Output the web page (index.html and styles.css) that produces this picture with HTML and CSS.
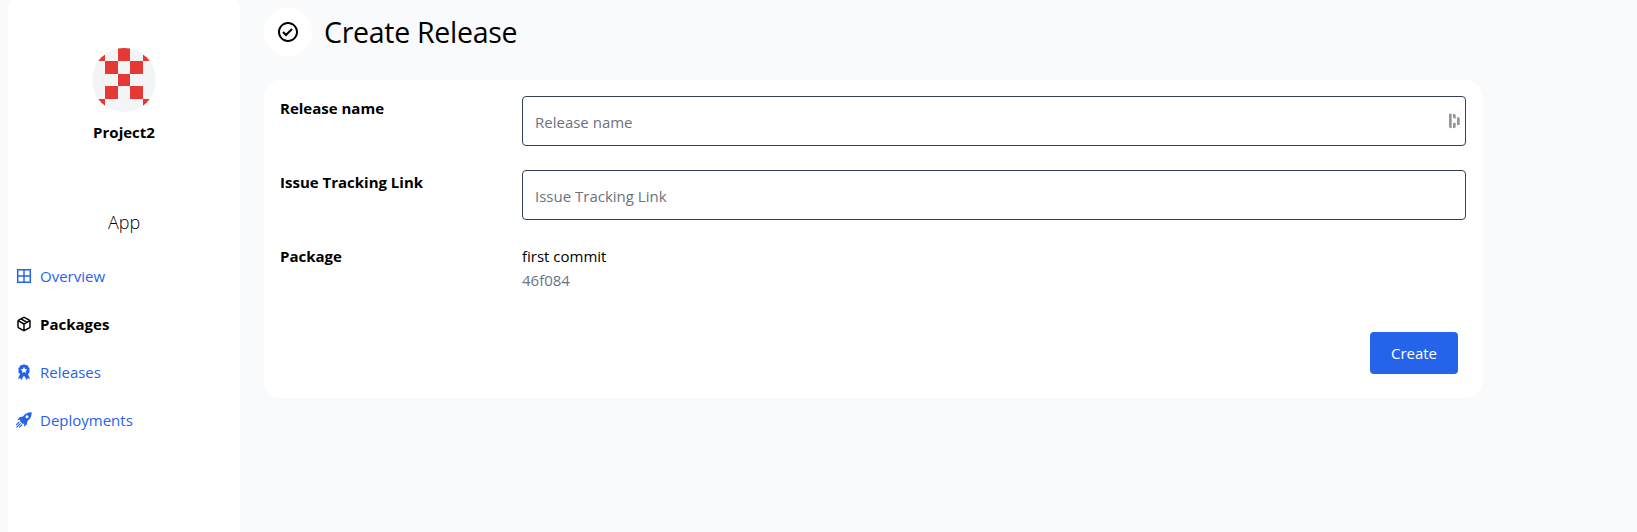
FILE: index.html
```html
<!DOCTYPE html>
<html lang="en">
<head>
<meta charset="utf-8">
<title>Create Release</title>
<link rel="stylesheet" href="styles.css">
</head>
<body>
<div class="layout">
  <aside class="sidebar">
    <svg class="avatar" viewBox="0 0 5 5" shape-rendering="crispEdges">
      <path fill="#e53935" d="M0 0h1v1H0zM2 0h1v1H2zM4 0h1v1H4zM1 1h1v1H1zM3 1h1v1H3zM2 2h1v1H2zM1 3h1v1H1zM3 3h1v1H3zM0 4h1v1H0zM4 4h1v1H4z"/>
    </svg>
    <div class="project">Project2</div>
    <div class="section">App</div>
    <nav class="nav">
      <a class="nav-item" href="#">
        <svg class="icon" viewBox="0 0 16 16" fill="none" stroke="currentColor" stroke-width="1.5"><path d="M1.7 1.7h12.6v12.6H1.7zM8 1.7v12.6M1.7 8h12.6"/></svg>
        <span>Overview</span>
      </a>
      <a class="nav-item active" href="#">
        <svg class="icon" viewBox="0 0 24 24" fill="none" stroke="currentColor" stroke-width="2.2" stroke-linecap="round" stroke-linejoin="round"><path d="M16.5 9.4 7.5 4.21M21 16V8a2 2 0 0 0-1-1.73l-7-4a2 2 0 0 0-2 0l-7 4A2 2 0 0 0 3 8v8a2 2 0 0 0 1 1.73l7 4a2 2 0 0 0 2 0l7-4A2 2 0 0 0 21 16zM3.27 6.96 12 12.01l8.73-5.05M12 22.08V12"/></svg>
        <span>Packages</span>
      </a>
      <a class="nav-item" href="#">
        <svg class="icon" viewBox="0 0 16 16" fill="currentColor"><path fill-rule="evenodd" d="M8 .3l1.7.8 1.9.2.8 1.7 1.3 1.4-.3 1.9.3 1.9-1.3 1.3-.4.8 2.1 4.1-2.3-.2-1.2 1.7L8.300 12h-.6l-2.300 3.900-1.200-1.700-2.300.2L4 10.300l-.4-.8-1.300-1.300.3-1.900-.3-1.900L3.600 3l.8-1.700 1.900-.2zM8 3 7 5l-2.200.3 1.600 1.600L6 9.100l2-1.050 2 1.050-.4-2.200 1.600-1.600L9 5z"/></svg>
        <span>Releases</span>
      </a>
      <a class="nav-item" href="#">
        <svg class="icon" viewBox="0 0 16 16"><path fill="currentColor" fill-rule="evenodd" d="M15.700.3C11.500.2 8.800 1.900 7 4.500L3.500 5.200 1.300 8.100l3.200-.4-.5 1.500 2.800 2.800 1.500-.5-.4 3.200 2.900-2.200.7-3.500c2.600-1.800 4.300-4.500 4.200-8.700zM11 3.300a1.500 1.500 0 1 1 0 3 1.500 1.500 0 0 1 0-3z"/><path stroke="currentColor" stroke-width="1.200" stroke-linecap="round" d="M3.100 10.100.7 12.500M4.400 11.600.8 15.200M5.900 12.900l-2.300 2.300"/></svg>
        <span>Deployments</span>
      </a>
    </nav>
  </aside>
  <main class="main">
    <header class="header">
      <div class="header-icon">
        <svg width="24" height="24" viewBox="0 0 24 24"><path d="M12 2C6.486 2 2 6.486 2 12s4.486 10 10 10 10-4.486 10-10S17.514 2 12 2zm0 18c-4.411 0-8-3.589-8-8s3.589-8 8-8 8 3.589 8 8-3.589 8-8 8z"/><path d="M9.999 13.587 7.700 11.292l-1.412 1.416 3.713 3.705 6.706-6.706-1.414-1.414z"/></svg>
      </div>
      <h1 class="title">Create Release</h1>
    </header>
    <form class="card">
      <div class="row">
        <label class="label" for="name">Release name</label>
        <div class="field">
          <input class="input" id="name" placeholder="Release name">
          <svg class="autofill" width="12" height="16" viewBox="0 0 12 16" fill="#9b9692"><path d="M0 .7h2.700v14.600L0 14.600zM4 .7l2.700.7v4.300L4 5zM4 10l2.700-.3v4.900l-2.700.7zM8 4l2.700.7v7.300H8z"/></svg>
        </div>
      </div>
      <div class="row">
        <label class="label" for="link">Issue Tracking Link</label>
        <div class="field"><input class="input" id="link" placeholder="Issue Tracking Link"></div>
      </div>
      <div class="row">
        <div class="label">Package</div>
        <div class="field">
          <div class="commit">first commit</div>
          <div class="hash">46f084</div>
        </div>
      </div>
      <div class="actions"><button class="button" type="button">Create</button></div>
    </form>
  </main>
</div>
</body>
</html>
```
FILE: styles.css
```css
* { box-sizing: border-box; }

body {
  margin: 0;
  height: 532px;
  overflow: hidden;
  background: #f9fafc;
  color: #000;
  font: 15px/24px "Segoe UI", "Open Sans", "Noto Sans", sans-serif;
}

.layout { display: flex; gap: 24px; padding-left: 8px; height: 532px; }

.sidebar {
  display: flex;
  flex-direction: column;
  flex: none;
  width: 232px;
  height: 560px;
  margin-top: -6px;
  padding-top: 54px;
  border-radius: 16px;
  background: #fff;
}

.avatar {
  width: 64px;
  height: 64px;
  align-self: center;
  border-radius: 50%;
  background: #f2f4f6;
}

.project {
  margin-top: 8px;
  text-align: center;
  font-weight: 700;
}

.section {
  margin-top: 64px;
  text-align: center;
  font-size: 18px;
  font-weight: 300;
  line-height: 28px;
}

.nav {
  display: flex;
  flex-direction: column;
  gap: 24px;
  margin-top: 28px;
  padding-left: 8px;
}

.nav-item {
  display: flex;
  align-items: center;
  gap: 8px;
  height: 24px;
  color: #2563eb;
  text-decoration: none;
}

.icon { width: 16px; height: 16px; }
.active { color: #000; font-weight: 700; }

.main { width: 1218px; padding-top: 8px; }

.header { display: flex; align-items: center; gap: 12px; }

.header-icon {
  display: grid;
  place-items: center;
  width: 48px;
  height: 48px;
  border-radius: 50%;
  background: #fff;
}

.title {
  margin: 0;
  font-size: 28.5px;
  font-weight: 400;
  letter-spacing: -0.28px;
  line-height: 36px;
}

.card {
  display: flex;
  flex-direction: column;
  gap: 24px;
  height: 318px;
  margin-top: 24px;
  padding: 16px;
  border-radius: 16px;
  background: #fff;
}

.row { display: grid; grid-template-columns: 242px 944px; }

.label { font-weight: 700; }

.field { position: relative; }

.input {
  display: block;
  width: 100%;
  height: 50px;
  padding: 2px 12px 0;
  border: 1px solid #334155;
  border-radius: 4px;
  background: #fff;
  font: inherit;
}

.input::placeholder { color: #6b7280; opacity: 1; }

.autofill { position: absolute; top: 17px; right: 5px; }

.hash { color: #6b7280; }

.actions { display: flex; justify-content: flex-end; padding: 16px 8px 0; }

.button {
  width: 88px;
  height: 42px;
  padding: 0;
  border: 0;
  border-radius: 4px;
  background: #2563eb;
  color: #fff;
  font: inherit;
}
```
